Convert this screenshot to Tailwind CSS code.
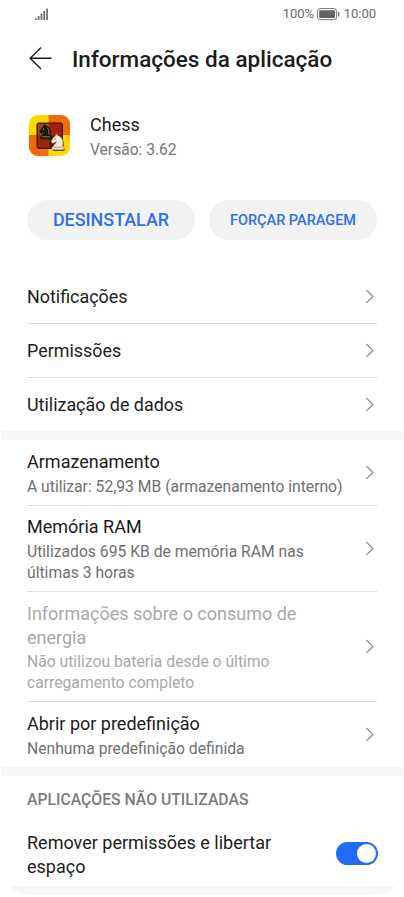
<!DOCTYPE html>
<html lang="pt">
<head>
    <meta charset="UTF-8">
    <meta name="viewport" content="width=device-width, initial-scale=1.0">
    <title>Informações da aplicação</title>
    <script src="https://cdn.jsdelivr.net/npm/@tailwindcss/browser@4"></script>
</head>
<body class="bg-white h-[897px] overflow-hidden font-['Roboto',sans-serif] text-[#1c1c1c]">
    <svg class="hidden">
        <symbol id="chevron" viewBox="0 0 10 16">
            <path d="M1.3 1 L7.9 7.5 L1.3 14" fill="none" stroke="#999" stroke-width="1.5"/>
        </symbol>
    </svg>

    <!-- Status bar -->
    <div class="h-7 pl-[35px] pr-7 flex items-center justify-between text-[13px] text-[#6b6b6b]">
        <svg class="w-[14px] h-[13px]" viewBox="0 0 14 13" fill="#6b6b6b">
            <rect x="0" y="10.2" width="1.7" height="1.8"/>
            <rect x="2.8" y="8" width="1.7" height="4"/>
            <rect x="5.6" y="5.5" width="1.7" height="6.5"/>
            <rect x="8.4" y="3" width="1.7" height="9"/>
            <rect x="11.2" y="0.5" width="1.7" height="11.5"/>
        </svg>
        <div class="flex items-center">
            <span>100%</span>
            <svg class="w-[23px] h-[13px] ml-[2.5px] mr-1" viewBox="0 0 23 13">
                <rect x="0.6" y="0.6" width="19" height="11" rx="2.6" fill="none" stroke="#777" stroke-width="1"/>
                <rect x="2.2" y="2.2" width="15.8" height="7.8" rx="1" fill="#626262"/>
                <rect x="21" y="3.6" width="1.3" height="5" rx=".6" fill="#777"/>
            </svg>
            <span>10:00</span>
        </div>
    </div>

    <!-- Header -->
    <header class="h-[62px] pl-7 flex items-center">
        <svg class="w-6 h-6 mr-5" viewBox="0 0 24 24" fill="none" stroke="#1c1c1c" stroke-width="1.4">
            <path d="M13 0.5 L2.2 11.3 L13 22.1 M2.2 11.3 H23.5"/>
        </svg>
        <h1 class="pt-0.5 text-[22.5px] font-medium whitespace-nowrap">Informações da aplicação</h1>
    </header>

    <!-- App summary -->
    <div class="h-[93px] pl-[29px] flex items-center">
        <svg class="w-[41px] h-[41px] mr-5 -mt-0.5" viewBox="0 0 41 41">
            <defs>
                <clipPath id="tile"><rect width="41" height="41" rx="9"/></clipPath>
                <linearGradient id="board" x1="0" y1="0" x2="1" y2="1">
                    <stop offset="0" stop-color="#6a2a0c"/>
                    <stop offset="1" stop-color="#4a1006"/>
                </linearGradient>
            </defs>
            <g clip-path="url(#tile)">
                <rect width="41" height="41" fill="#ffd800"/>
                <rect x="19.5" width="21.5" height="20" fill="#ef6a08"/>
                <rect y="20" width="19.5" height="21" fill="#ef6a08"/>
            </g>
            <rect x="8" y="8" width="25.5" height="25.5" rx="2" fill="url(#board)" stroke="#3c1208"/>
            <rect x="9" y="9" width="11.5" height="11.5" fill="#94500f"/>
            <rect x="20.5" y="9" width="12" height="11.5" fill="#a8200c"/>
            <rect x="9" y="20.5" width="11.5" height="12" fill="#9c260c"/>
            <path d="M11.8 23.8 h10.4 v-2.2 l-1.1-1 c1.2-4.6-.2-8.6-4.2-9.6 l-1.3-1.6 -.8 2.1 c-1.9 1.1-3.1 3.1-3.9 5.4 l1.4 1.6 3.4-1.5 c-.3 1.7-2.5 2.3-2.8 4 l-1.1 1z" fill="#191510" stroke="#191510" stroke-width=".8"/>
            <circle cx="14.6" cy="14" r=".6" fill="#eee"/>
            <path d="M13 21.8 h8 M18 12.6 c1.8 1.6 2.4 4 1.8 7" fill="none" stroke="#c9a27c" stroke-width=".7"/>
            <path d="M24 36 h11.5 v-2.5 l-1.2-1 c1.3-5-.2-9.4-4.6-10.6 l-1.3-1.7 -.8 2.3 c-2 1.2-3.2 3.2-4.1 5.5 l1.4 1.7 3.6-1.6 c-.3 1.8-2.7 2.5-3.1 4.8 l-1.4 1z" fill="#3a1e08" opacity=".8"/>
            <path d="M22.8 34.8 h12 v-2.4 l-1.3-1.1 c1.4-5.2-.2-9.8-4.8-10.9 l-1.4-1.8 -.9 2.4 c-2.1 1.3-3.4 3.3-4.3 5.7 l1.5 1.8 3.8-1.7 c-.3 1.9-2.9 2.6-3.3 4.8 l-1.3 1z" fill="#f5ead8" stroke="#8b7157" stroke-width=".5"/>
            <circle cx="26" cy="24" r=".6" fill="#333"/>
            <path d="M24.5 32.2 h8.6" stroke="#8d7658" stroke-width=".7"/>
        </svg>
        <div class="pt-0.5">
            <div class="text-[18px] leading-6">Chess</div>
            <div class="text-[15.6px] leading-[26px] text-[#757575]">Versão: 3.62</div>
        </div>
    </div>

    <!-- Actions -->
    <div class="mt-[16.5px] px-[27px] flex gap-[14px] font-medium text-[#2f6fe9]">
        <button class="flex-1 h-[40.5px] pt-0.5 rounded-full bg-[#f2f2f2] text-[17.9px]">DESINSTALAR</button>
        <button class="flex-1 h-[40.5px] pt-0.5 rounded-full bg-[#f2f2f2] text-[14.5px] whitespace-nowrap">FORÇAR PARAGEM</button>
    </div>

    <!-- Simple entries -->
    <section class="mt-[30px] px-[27px] text-[17.9px]">
        <div class="h-[54px] flex items-center justify-between border-b border-[#dfdfdf]">
            <span class="pt-px">Notificações</span>
            <svg class="w-[10px] h-4 mr-0.5"><use href="#chevron"/></svg>
        </div>
        <div class="h-[54px] flex items-center justify-between border-b border-[#dfdfdf]">
            <span class="pt-px">Permissões</span>
            <svg class="w-[10px] h-4 mr-0.5"><use href="#chevron"/></svg>
        </div>
        <div class="h-[53px] flex items-center justify-between">
            <span class="pt-px">Utilização de dados</span>
            <svg class="w-[10px] h-4 mr-0.5"><use href="#chevron"/></svg>
        </div>
    </section>

    <div class="h-[9px] mx-px bg-[#f6f6f6]"></div>

    <!-- Entries with details -->
    <section class="px-[27px]">
        <div class="h-[66px] flex items-center justify-between border-b border-[#dfdfdf]">
            <div class="pt-0.5">
                <div class="text-[18px] leading-6">Armazenamento</div>
                <div class="mt-0.5 text-[15.68px] leading-[21px] text-[#6f6f6f] whitespace-nowrap">A utilizar: 52,93 MB (armazenamento interno)</div>
            </div>
            <svg class="w-[10px] h-4 mr-0.5"><use href="#chevron"/></svg>
        </div>
        <div class="h-[86px] flex items-center justify-between border-b border-[#dfdfdf]">
            <div class="pt-px">
                <div class="text-[18px] leading-6">Memória RAM</div>
                <div class="mt-0.5 text-[15.7px] leading-[21px] text-[#6f6f6f]">Utilizados 695 KB de memória RAM nas<br>últimas 3 horas</div>
            </div>
            <svg class="w-[10px] h-4 mr-0.5"><use href="#chevron"/></svg>
        </div>
        <div class="h-[110px] flex items-center justify-between border-b border-[#dfdfdf]">
            <div class="pt-0.5 text-[#a8a8a8]">
                <div class="text-[18px] leading-[23.5px]">Informações sobre o consumo de<br>energia</div>
                <div class="mt-0.5 text-[15.7px] leading-[21px]">Não utilizou bateria desde o último<br>carregamento completo</div>
            </div>
            <svg class="w-[10px] h-4 mr-0.5"><use href="#chevron"/></svg>
        </div>
        <div class="h-[65px] flex items-center justify-between">
            <div class="pt-0.5">
                <div class="text-[18px] leading-6">Abrir por predefinição</div>
                <div class="mt-0.5 text-[15.7px] leading-[21px] text-[#6f6f6f]">Nenhuma predefinição definida</div>
            </div>
            <svg class="w-[10px] h-4 mr-0.5"><use href="#chevron"/></svg>
        </div>
    </section>

    <div class="h-[9px] mx-px bg-[#f6f6f6]"></div>

    <!-- Unused apps -->
    <section class="px-[27px]">
        <h2 class="h-[46px] pt-0.5 flex items-center text-[15.75px] font-medium text-[#7c7c7c]">APLICAÇÕES NÃO UTILIZADAS</h2>
        <div class="h-[64px] flex items-center justify-between">
            <div class="pt-px text-[18px] leading-6">Remover permissões e libertar<br>espaço</div>
            <div class="w-[42px] h-[23px] -mr-px -mt-0.5 rounded-full bg-[#246cf5] flex items-center justify-end pr-[2px]">
                <div class="size-[19px] rounded-full bg-white"></div>
            </div>
        </div>
    </section>

    <svg class="block w-[404px] h-[9px]" viewBox="0 0 404 9">
        <path d="M10 0 H395 Q386 9 374 9 H30 Q18 8 10 0Z" fill="#f6f6f6"/>
    </svg>
</body>
</html>
